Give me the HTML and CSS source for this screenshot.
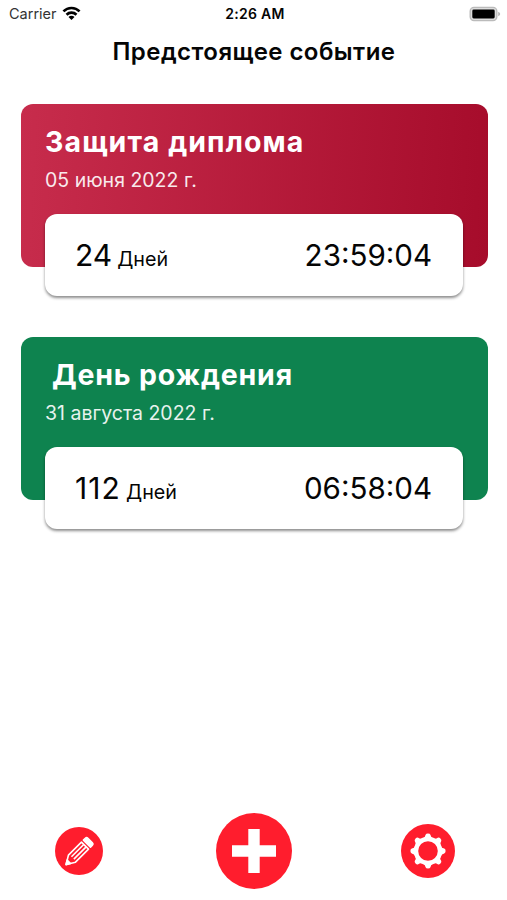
FILE: index.html
```html
<!DOCTYPE html>
<html lang="ru">
<head>
<meta charset="utf-8">
<title>Предстоящее событие</title>
<link rel="stylesheet" href="styles.css">
</head>
<body>
<div class="screen">
  <div class="status">
    <div class="status-left">
      <span class="carrier">Carrier</span>
      <svg class="wifi" viewBox="0 0 20 16" aria-hidden="true">
        <path d="M1.4 5.8a12 12 0 0 1 17.2 0M4.7 9.3a7.4 7.4 0 0 1 10.6 0" fill="none" stroke="#000" stroke-width="2.8"/>
        <path d="M10 15 6.8 11.8a4.5 4.5 0 0 1 6.4 0z"/>
      </svg>
    </div>
    <span class="clock">2:26 AM</span>
    <div class="status-right">
      <svg class="battery" viewBox="0 0 32 16" aria-hidden="true">
        <rect x="1.2" y="1.4" width="26.6" height="13.2" rx="3.8" fill="#ddd" stroke="#bbb" stroke-width="1.4"/>
        <rect x="3.3" y="3.6" width="22.4" height="8.8" rx="1.4"/>
        <path d="M29.2 5.8q2 .7 2 2.2t-2 2.2z" fill="#b5b5b5"/>
      </svg>
    </div>
  </div>
  <h1 class="heading">Предстоящее событие</h1>
  <main class="events">
    <section class="event red">
      <h2 class="name wide">Защита диплома</h2>
      <p class="date">05 июня 2022 г.</p>
      <div class="count">
        <div class="days"><span class="num">24</span><span class="unit">Дней</span></div>
        <span class="time">23:59:04</span>
      </div>
    </section>
    <section class="event green">
      <h2 class="name indent">День рождения</h2>
      <p class="date">31 августа 2022 г.</p>
      <div class="count">
        <div class="days"><span class="num spaced">112</span><span class="unit">Дней</span></div>
        <span class="time">06:58:04</span>
      </div>
    </section>
  </main>
  <nav class="actions">
    <button class="action edit" aria-label="Изменить">
      <svg viewBox="0 0 48 48" aria-hidden="true">
        <circle cx="24" cy="24" r="24" fill="#ff1d2d"/>
        <g transform="translate(10.6 38) rotate(-45)" fill="none" stroke="#fff" stroke-width="1.6" stroke-linejoin="round">
          <path d="M.8 0 9-5H27.4V5H9z"/>
          <path d="M10-1.7H27M10 1.7H27"/>
          <path d="M.5 0 4.6-2.4V2.4z" fill="#fff"/>
          <path d="M30.2-5h2.7q1.8 0 1.8 1.8v6.4q0 1.8-1.8 1.8h-2.7z" fill="#fff"/>
        </g>
      </svg>
    </button>
    <button class="action add" aria-label="Добавить">
      <svg viewBox="0 0 76 76" aria-hidden="true">
        <circle cx="38" cy="38" r="38" fill="#ff1d2d"/>
        <path d="M32.3 16h11.4v16.2H60v11.6H43.7V60H32.3V43.8H16V32.2h16.3z" fill="#fff"/>
      </svg>
    </button>
    <button class="action settings" aria-label="Настройки">
      <svg viewBox="0 0 54 54" aria-hidden="true">
        <circle cx="27" cy="27" r="27" fill="#ff1d2d"/>
        <g transform="translate(27 27)">
          <circle r="12" fill="none" stroke="#fff" stroke-width="4.4"/>
          <g fill="#fff">
            <path id="tooth" d="M-5.2-12.6Q-2.8-13.6-2.4-16.2-2-17.6 0-17.6T2.4-16.2Q2.8-13.6 5.2-12.6z"/>
            <use href="#tooth" transform="rotate(45)"/>
            <use href="#tooth" transform="rotate(90)"/>
            <use href="#tooth" transform="rotate(135)"/>
            <use href="#tooth" transform="rotate(180)"/>
            <use href="#tooth" transform="rotate(225)"/>
            <use href="#tooth" transform="rotate(270)"/>
            <use href="#tooth" transform="rotate(315)"/>
          </g>
        </g>
      </svg>
    </button>
  </nav>
</div>
</body>
</html>
```
FILE: styles.css
```css
* { box-sizing: border-box; margin: 0; }
body {
  background: #fff;
  color: #050505;
  font-family: Inter, "Liberation Sans", sans-serif;
}
.screen {
  display: flex;
  flex-direction: column;
  width: 507px;
  height: 900px;
  overflow: hidden;
}
.status {
  display: grid;
  grid-template-columns: 1fr auto 1fr;
  align-items: center;
  height: 27px;
  padding: 0 6px 0 9px;
}
.status-left { display: flex; align-items: center; gap: 5px; }
.status-right { display: flex; justify-content: flex-end; }
.carrier { font-size: 14.5px; line-height: 27px; color: #333; }
.wifi { width: 19px; height: 15px; }
.clock { font-size: 14px; line-height: 27px; font-weight: 600; letter-spacing: 0.3px; }
.battery { width: 32px; height: 16px; }
.heading {
  height: 48px;
  padding-left: 1px;
  text-align: center;
  font-size: 24px;
  line-height: 49px;
  font-weight: 600;
  letter-spacing: 0.45px;
}
.events {
  display: flex;
  flex-direction: column;
  gap: 70.3px;
  padding: 28.5px 19.4px 0 20.5px;
}
.event { height: 163px; padding: 22px 24.5px 0; border-radius: 12px; }
.red { background: linear-gradient(93deg, #c72c4c, #a60c2b); }
.green { background: #0e834f; }
.name {
  color: #fff;
  font-size: 28.5px;
  line-height: 32px;
  font-weight: 700;
  letter-spacing: 0.8px;
}
.wide { letter-spacing: 1.1px; }
.indent { padding-left: 7px; }
.date {
  margin-top: 10px;
  color: #fff;
  opacity: 0.9;
  font-size: 19.5px;
  line-height: 25px;
}
.count {
  display: flex;
  align-items: baseline;
  justify-content: space-between;
  height: 81.5px;
  margin-top: 21.5px;
  padding: 21.5px 31px 0 30px;
  background: #fff;
  border-radius: 12px;
  box-shadow: 0 2px 3px rgba(0, 0, 0, 0.45);
}
.days { display: flex; align-items: baseline; gap: 5px; }
.num { font-size: 30px; line-height: 38px; }
.spaced { letter-spacing: 1.1px; }
.unit { font-size: 19.7px; }
.time { font-size: 29.6px; line-height: 38px; }
.actions {
  display: grid;
  grid-template-columns: 48px 76px 54px;
  justify-content: space-between;
  align-items: center;
  height: 76px;
  margin: auto 51.5px 11px 55.3px;
}
.action { padding: 0; border: 0; background: none; }
.add { margin: 0 -2px 0 2px; }
.action svg { display: block; width: 100%; }
```
